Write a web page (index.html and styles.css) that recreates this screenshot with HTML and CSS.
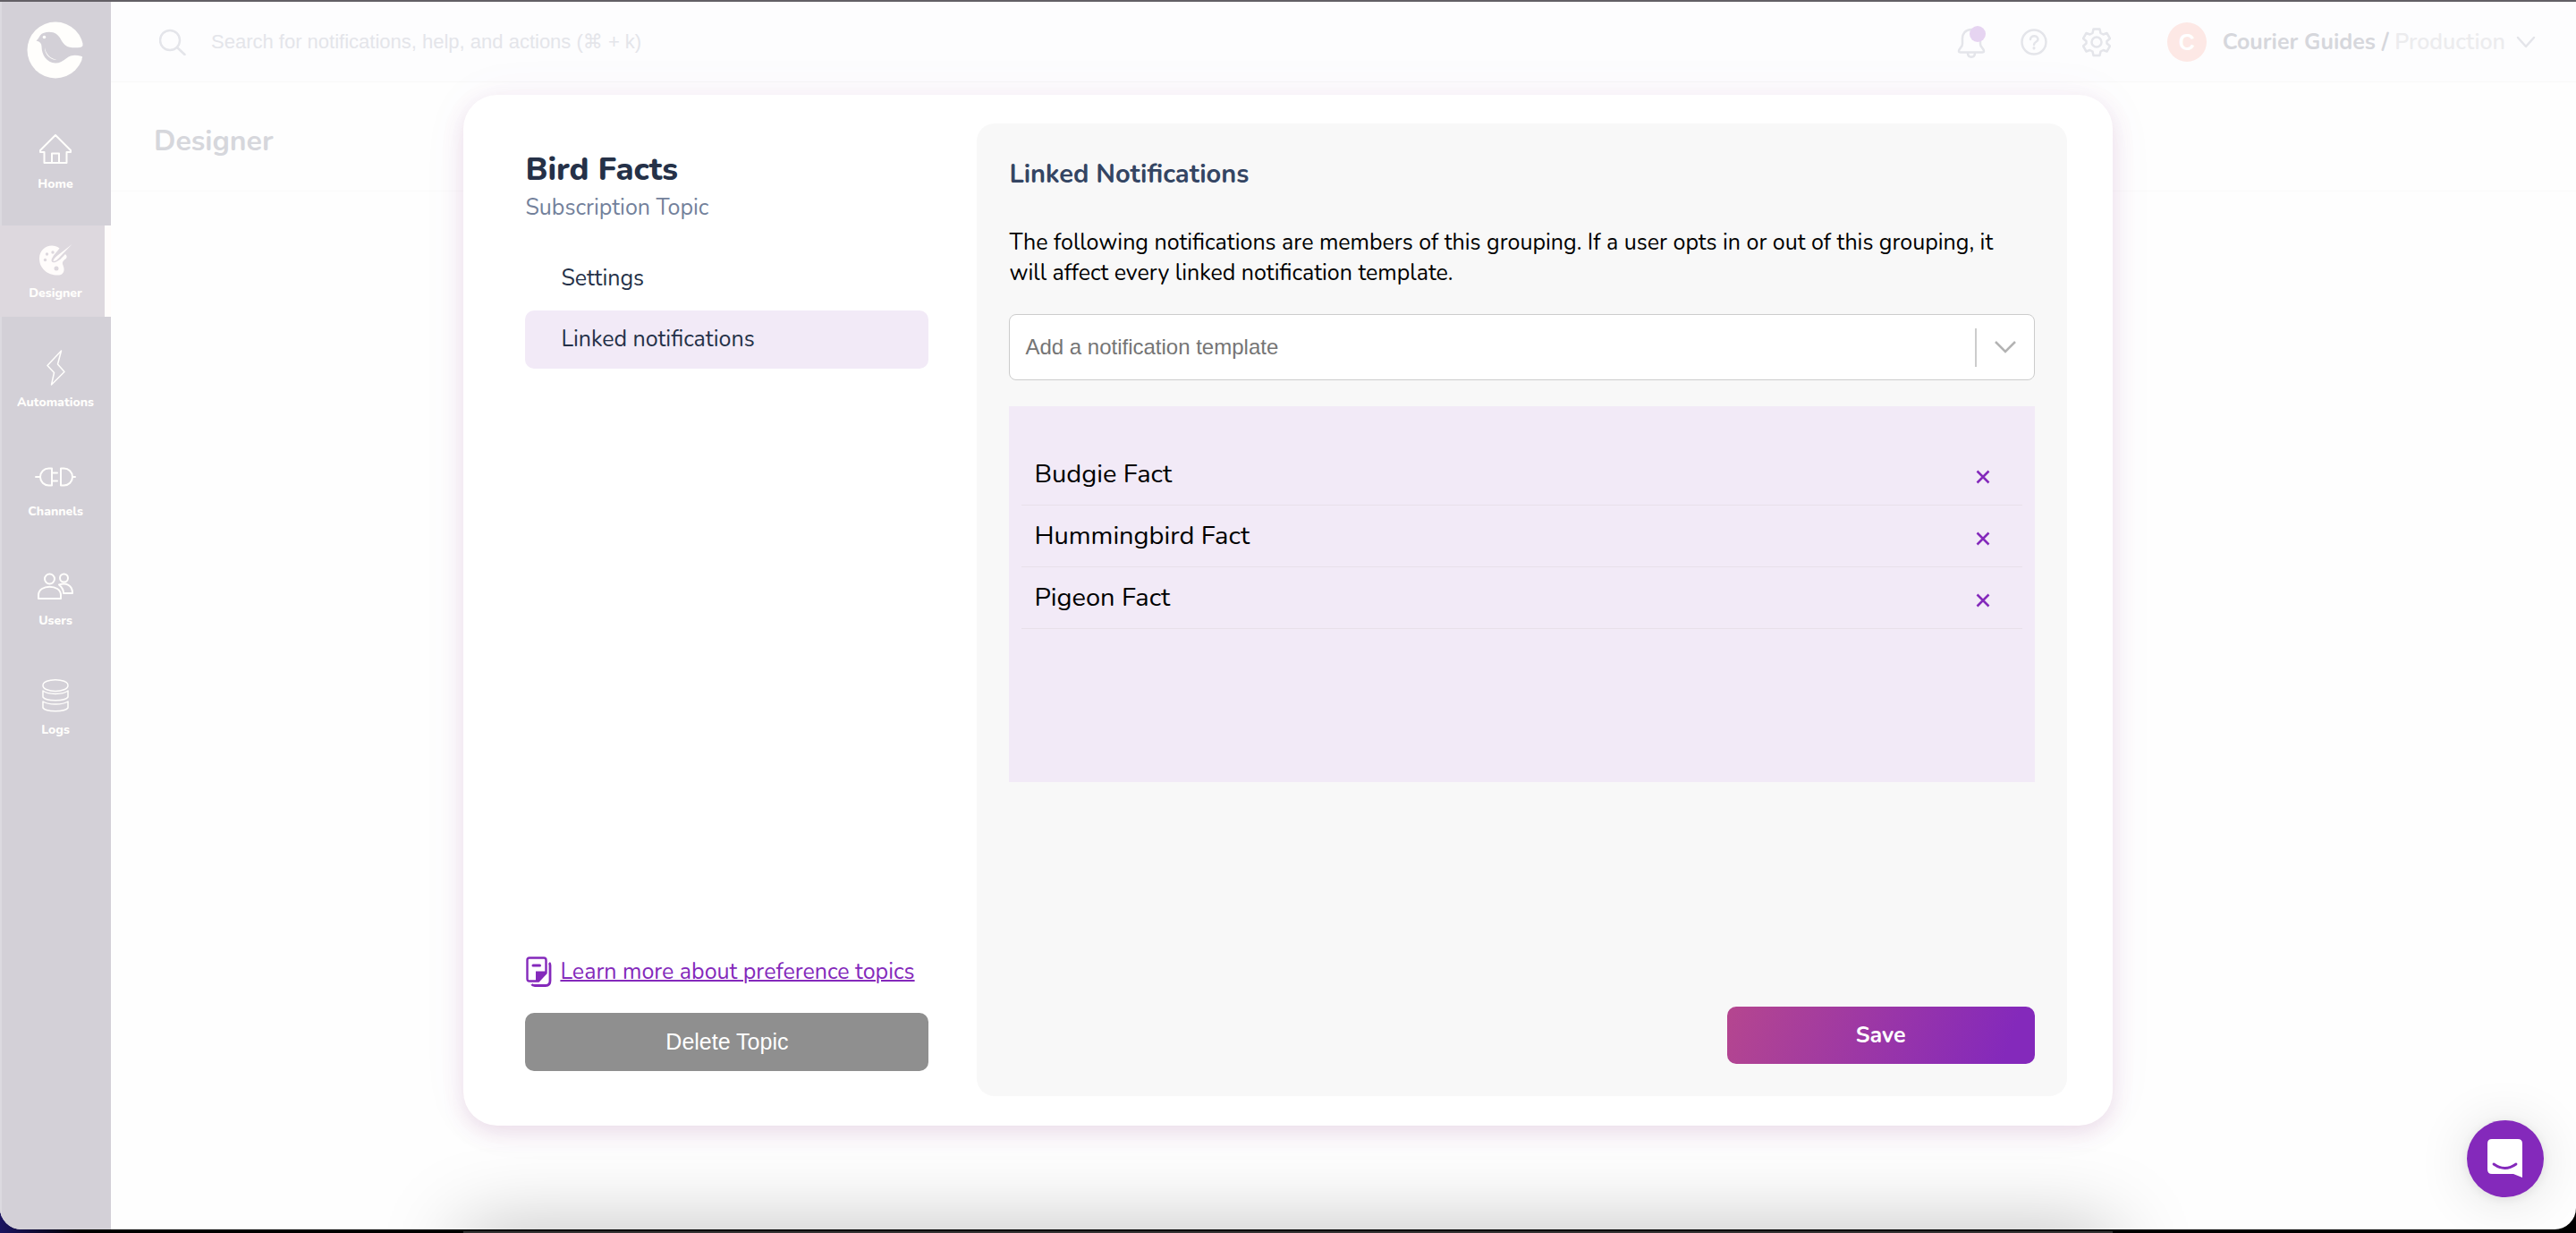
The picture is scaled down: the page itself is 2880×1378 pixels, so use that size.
FILE: index.html
```html
<!DOCTYPE html>
<html lang="en">
<head>
<meta charset="utf-8">
<title>Designer – Bird Facts</title>
<link rel="stylesheet" href="styles.css">
</head>
<body>
<div class="window">
  <nav class="sidebar" aria-label="Main">
    <a class="logo" href="#" aria-label="Courier">
      <svg viewBox="0 0 64 64" width="64" height="64">
        <circle cx="32" cy="32" r="31.500" fill="#fffefc"/>
        <path fill="#d3d0d7" d="M10.500 21.500C13 19.500 13.500 17.500 15 15.500C18 11.500 28 10.500 33 14C38 17.500 38.500 23 43 26.500C47 30 55 29.500 59.500 29C62 28.500 63 27 62.500 25L66 24L66 41L61.500 42C62.500 40 62.500 39 60.500 38.800C54 37 49 37.500 44.500 41C40 44.500 37 46.500 32 46.500C22 46 16.500 37 16.500 28C16.500 25 15 22.500 10.500 21.500Z"/>
        <circle cx="19.500" cy="17.500" r="1.800" fill="#fffefc"/>
        <path fill="#fffefc" d="M20 29C21 36 26 41.500 33 42.500C29 44 19.500 38 20 29Z"/>
      </svg>
    </a>
    <ul class="menu">
      <li><a class="menu-item" href="#">
        <svg class="icon" viewBox="0 0 40 40"><path d="M20 4L3 21V23H7.500V35H32.500V23H37V21ZM16 35V24.500H24V35"/></svg>
        <span>Home</span></a></li>
      <li><a class="menu-item active" href="#" aria-current="page">
        <svg class="icon" viewBox="0 0 40 40"><path fill="#fffcfb" stroke="none" d="M24.500 8.500C15 1.500 2 8 2 20C2 32 13 39.500 24 38.500C28 38 30 35 29.500 31C29 27 26.500 25.500 29 22.500C31 20 33 20.500 32.500 17L31 15C27 19.500 24 22.500 20 24C17 25 14.500 23.500 16 20C18 15.500 22 12 24.500 8.500Z"/><path fill="#fffcfb" stroke="none" d="M38.500 4L23 16C20 18.500 17.500 20.500 17.500 23C21 23 23 20 25.500 17.500Z"/><g fill="#ddd8de" stroke="none"><circle cx="17" cy="13" r="1.700"/><circle cx="10.500" cy="15" r="1.700"/><circle cx="8.500" cy="21.500" r="1.700"/><circle cx="21" cy="31" r="2.500"/></g></svg>
        <span>Designer</span></a></li>
      <li><a class="menu-item" href="#">
        <svg class="icon thin" viewBox="0 0 40 40"><path d="M26.500 1L11 17.500L18.500 25.500L15.500 39L30 24.500L22.500 16Z"/></svg>
        <span>Automations</span></a></li>
      <li><a class="menu-item" href="#">
        <svg class="icon wide" viewBox="0 0 44 40"><path d="M0 20H4M18 10.500V29.500H14.500A9.500 9.500 0 0 1 14.500 10.500ZM18 15.500H24M18 24.500H24M28 10.500V29.500H31.500A9.500 9.500 0 0 0 31.500 10.500ZM41 20H44"/></svg>
        <span>Channels</span></a></li>
      <li><a class="menu-item" href="#">
        <svg class="icon" viewBox="0 0 40 40"><circle cx="13.500" cy="12" r="5.500"/><circle cx="29.500" cy="11" r="4.500"/><path d="M1 34V30C1 17.500 26 17.500 26 30V34ZM24 18.500C32 16 39 19 39 28H29C29 23.500 27 21 24 18.500Z"/></svg>
        <span>Users</span></a></li>
      <li><a class="menu-item" href="#">
        <svg class="icon thin" viewBox="0 0 40 40"><path d="M6 9C6 .5 34 .5 34 9C34 17.500 6 17.500 6 9ZM6 15C12 19.500 28 19.500 34 15V22C31 27 9 27 6 22ZM6 27C12 31 28 31 34 27V34C31 39 9 39 6 34Z"/></svg>
        <span>Logs</span></a></li>
    </ul>
  </nav>

  <div class="page">
    <header class="topbar">
      <label class="search">
        <svg viewBox="0 0 30 30" width="30" height="30"><circle cx="12" cy="13" r="11"/><path d="M20 21L28.500 29"/></svg>
        <input type="search" placeholder="Search for notifications, help, and actions (⌘ + k)" aria-label="Search">
      </label>
      <div class="tools">
        <button type="button" aria-label="Alerts">
          <svg viewBox="0 0 32 36" width="32" height="36"><path d="M16 4C9 4 6 9 6 14V20C6 24 2 25 2 28Q2 29.500 4 29.500H28Q30 29.500 30 28C30 25 26 24 26 20V14C26 9 23 4 16 4ZM12 31C12.500 36 19.500 36 20 31"/><circle class="dot" cx="23" cy="9" r="9"/></svg>
        </button>
        <button type="button" aria-label="Help">
          <svg viewBox="0 0 32 36" width="32" height="36"><circle cx="16" cy="18" r="13.500"/><path d="M12 15C12 10 20.500 10 20.500 15C20.500 18 16 17.500 16 21" stroke-width="2.500"/><path d="M16 24.500V25" stroke-width="3"/></svg>
        </button>
        <button type="button" aria-label="Settings">
          <svg viewBox="0 0 32 36" width="32" height="36"><circle cx="16" cy="18" r="5.500"/><path d="M12.500 3.500H19.500L20.500 8L23.500 9.500L27.500 8L31 14L27.500 17V19.500L31 22.500L27.500 28.500L23.500 27L20.500 28.500L19.500 33H12.500L11.500 28.500L8.500 27L4.500 28.500L1 22.500L4.500 19.500V17L1 14L4.500 8L8.500 9.500L11.500 8Z"/></svg>
        </button>
      </div>
      <button type="button" class="account">
        <span class="avatar">C</span>
        <span><b>Courier Guides /</b> Production</span>
        <svg viewBox="0 0 22 14" width="22" height="14"><path d="M2 2L11 12L20 2"/></svg>
      </button>
    </header>
    <div class="page-head"><h1>Designer</h1></div>
  </div>

  <div class="overlay">
    <div class="modal" role="dialog" aria-modal="true" aria-labelledby="topic">
      <section class="side">
        <h2 id="topic">Bird Facts</h2>
        <p class="kind">Subscription Topic</p>
        <nav class="tabs" aria-label="Topic">
          <a href="#">Settings</a>
          <a href="#" class="current" aria-current="true">Linked notifications</a>
        </nav>
        <p class="learn">
          <svg viewBox="0 0 30 36" width="30" height="36"><path d="M5 2.500H21Q23.500 2.500 23.500 5V19.500L15 28.500H5Q2.500 28.500 2.500 26V5Q2.500 2.500 5 2.500Z" fill="none" stroke="#8429bb" stroke-width="2.400"/><path d="M12 17.500H24V20L15.500 29H12Z" fill="#8429bb"/><path d="M9 11H16.500" stroke="#8429bb" stroke-width="3" stroke-linecap="round"/><path d="M27 8Q28 9 28 11V28Q28 33.500 23 33.500H11Q8.500 33.500 7.500 32" fill="none" stroke="#8429bb" stroke-width="2.800"/></svg>
          <a href="#">Learn more about preference topics</a>
        </p>
        <button type="button" class="delete">Delete Topic</button>
      </section>

      <section class="panel">
        <h3>Linked Notifications</h3>
        <p>The following notifications are members of this grouping. If a user opts in or out of this grouping, it will affect every linked notification template.</p>
        <div class="picker">
          <select aria-label="Notification template"><option>Add a notification template</option></select>
          <span class="picker-arrow"><svg viewBox="0 0 24 14" width="24" height="14"><path d="M1 1L12 12L23 1" fill="none" stroke="#b3b3b3" stroke-width="2.500"/></svg></span>
        </div>
        <ul class="linked">
          <li>Budgie Fact<button type="button" aria-label="Remove Budgie Fact"><svg viewBox="0 0 16 16" width="16" height="16"><path d="M1.500 1.500L14.500 14.500M14.500 1.500L1.500 14.500"/></svg></button></li>
          <li>Hummingbird Fact<button type="button" aria-label="Remove Hummingbird Fact"><svg viewBox="0 0 16 16" width="16" height="16"><path d="M1.500 1.500L14.500 14.500M14.500 1.500L1.500 14.500"/></svg></button></li>
          <li>Pigeon Fact<button type="button" aria-label="Remove Pigeon Fact"><svg viewBox="0 0 16 16" width="16" height="16"><path d="M1.500 1.500L14.500 14.500M14.500 1.500L1.500 14.500"/></svg></button></li>
        </ul>
        <button type="button" class="save">Save</button>
      </section>
    </div>
  </div>

  <div class="dock-shadow"></div>
  <button type="button" class="chat" aria-label="Open chat">
    <svg viewBox="0 0 40 44" width="40" height="44"><path d="M5 0H34Q39 0 39 5V43L29 39H5Q0 39 0 34V5Q0 0 5 0Z" fill="#fff"/><path d="M7 28Q19.500 37 32 28" fill="none" stroke="#8429bb" stroke-width="2.800" stroke-linecap="round"/></svg>
  </button>
</div>
<div class="dock"></div>
</body>
</html>
```
FILE: styles.css
```css
* { box-sizing: border-box; }

body {
  margin: 0;
  display: flex;
  flex-direction: column;
  min-height: 100vh;
  background: linear-gradient(90deg, #1b1460, #000 90px);
  color: #000;
  font: 400 25px/34px Nunito, "Nunito Sans", "Open Sans", sans-serif;
}

h1, h2, h3, p, ul { margin: 0; padding: 0; }
ul { list-style: none; }
button { border: 0; padding: 0; background: none; font: inherit; color: inherit; cursor: pointer; }
a { color: inherit; text-decoration: none; }
svg { display: block; flex: none; }

.window {
  position: relative;
  flex: 1;
  display: flex;
  overflow: hidden;
  border-top: 2px solid #636066;
  border-radius: 0 0 24px 24px;
  background: #fefefe;
}

/* Sidebar */
.sidebar {
  width: 124px;
  flex: none;
  padding-top: 22px;
  background: #d3d0d7;
  box-shadow: inset 2px 0 #dcdae0;
  color: #fffefc;
}
.logo { display: flex; justify-content: center; margin-bottom: 42px; }
.menu { display: flex; flex-direction: column; gap: 20px; }
.menu-item {
  display: flex;
  flex-direction: column;
  align-items: center;
  gap: 9px;
  height: 102px;
  padding-top: 17px;
  font-size: 14px;
  line-height: 20px;
  font-weight: 800;
}
.menu-item.active { background: #ddd8de; box-shadow: inset -7px 0 #fffcfb; }
.icon {
  width: 40px;
  height: 40px;
  overflow: visible;
  fill: none;
  stroke: #fffefc;
  stroke-width: 2;
  stroke-linejoin: round;
  stroke-linecap: round;
}
.icon.thin { stroke-width: 1.5; }
.icon.wide { width: 44px; }

/* Page behind the dialog */
.page { flex: 1; min-width: 0; }
.topbar {
  display: flex;
  align-items: center;
  height: 90px;
  padding: 0 45px 0 54px;
  border-bottom: 1px solid #f8f8f8;
  background: #fdfdfe;
}
.topbar svg { fill: none; stroke: #e4e5ea; stroke-width: 2.5; stroke-linejoin: round; stroke-linecap: round; }
.search { flex: 1; display: flex; align-items: center; gap: 28px; }
.search input {
  flex: 1;
  border: 0;
  padding: 0;
  outline: 0;
  background: none;
  font: 22px/30px "Liberation Sans", Arial, "DejaVu Sans", sans-serif;
}
.search input::placeholder { color: #e4e5ea; opacity: 1; }
.tools { display: flex; gap: 38px; margin-right: 63px; }
.tools .dot { fill: #e6d4f1; stroke: none; }
.account { display: flex; align-items: center; color: #ececee; white-space: nowrap; font-weight: 600; }
.account b { color: #d6d7dc; font-weight: 700; }
.account svg { margin-left: 12px; }
.avatar {
  display: grid;
  place-items: center;
  width: 44px;
  height: 44px;
  margin-right: 18px;
  border-radius: 50%;
  background: #fde8e5;
  color: #fff;
  font: 700 25px/34px "Liberation Sans", Arial, sans-serif;
}
.page-head {
  height: 122px;
  padding: 43px 48px 0;
  border-bottom: 1px solid #fafafa;
}
.page-head h1 { color: #d6d7dc; font-size: 32px; line-height: 46px; font-weight: 700; }

/* Dialog */
.overlay {
  position: absolute;
  inset: 0;
  display: flex;
  justify-content: center;
  padding: 104px 0 116px;
}
.modal {
  display: grid;
  grid-template-columns: 451px 1fr;
  gap: 54px;
  width: 64%;
  padding: 32px 51px 33px 69px;
  border-radius: 38px;
  background: #fff;
  box-shadow: 0 8px 24px rgba(150, 70, 130, .16), 0 0 60px rgba(130, 41, 187, .04);
}
.side { display: flex; flex-direction: column; padding: 29px 0 28px; }
.side h2 { color: #253148; font-size: 36px; line-height: 46px; font-weight: 800; }
.kind { margin-top: 2px; color: #73819b; }
.tabs { display: flex; flex-direction: column; gap: 3px; margin-top: 30px; color: #253148; }
.tabs a { padding: 15px 40px 16px; border-radius: 10px; }
.tabs .current { background: #f2eaf7; }
.learn { display: flex; align-items: center; gap: 9px; margin: auto 0 28px; color: #8429bb; }
.learn a { text-decoration: underline; text-decoration-thickness: 2px; }
.delete {
  padding: 15px 0 16px;
  border-radius: 10px;
  background: #8f8f8f;
  color: #fff;
  font-family: "Liberation Sans", Arial, sans-serif;
}

.panel {
  display: flex;
  flex-direction: column;
  padding: 36px;
  border-radius: 20px;
  background: #f8f8f8;
}
.panel h3 { margin-bottom: 38px; color: #344563; font-size: 29px; line-height: 42px; font-weight: 700; }
.picker { display: grid; margin: 29px 0; }
.picker > * { grid-area: 1 / 1; }
.picker select {
  appearance: none;
  height: 74px;
  padding: 0 90px 0 17px;
  border: 1px solid #ccc;
  border-radius: 8px;
  background: #fff;
  color: #757575;
  font: 24px/34px "Liberation Sans", Arial, sans-serif;
}
.picker-arrow {
  place-self: center end;
  display: flex;
  align-items: center;
  height: 43px;
  padding: 0 21px 0 20px;
  border-left: 2px solid #ccc;
  pointer-events: none;
}
.linked { min-height: 420px; padding: 42px 14px; background: #f2eaf7; }
.linked li {
  display: flex;
  align-items: center;
  justify-content: space-between;
  height: 69px;
  padding: 0 36px 0 14px;
  border-bottom: 1px solid #e8e0ea;
  font-size: 29px;
}
.linked button { padding-top: 6px; }
.linked svg { stroke: #8429bb; stroke-width: 2.5; }
.save {
  align-self: flex-end;
  width: 344px;
  margin-top: auto;
  padding: 15px 0;
  border-radius: 10px;
  background: linear-gradient(110deg, #b5468f, #8429bb 90%);
  color: #fff;
  font-weight: 700;
}

/* Floating over the page */
.chat {
  position: absolute;
  right: 36px;
  bottom: 36px;
  display: grid;
  place-items: center;
  width: 86px;
  height: 86px;
  border-radius: 50%;
  background: #8429bb;
  box-shadow: 0 2px 12px rgba(0, 0, 0, .08), 0 4px 60px rgba(0, 0, 0, .12);
}
.dock-shadow {
  position: absolute;
  top: 100%;
  left: 18%;
  right: 18%;
  height: 80px;
  box-shadow: 0 0 90px rgba(0, 0, 0, .26);
}
.dock { height: 4px; margin: 0 18%; border-top: 2px solid #000; background: #333; }
```
